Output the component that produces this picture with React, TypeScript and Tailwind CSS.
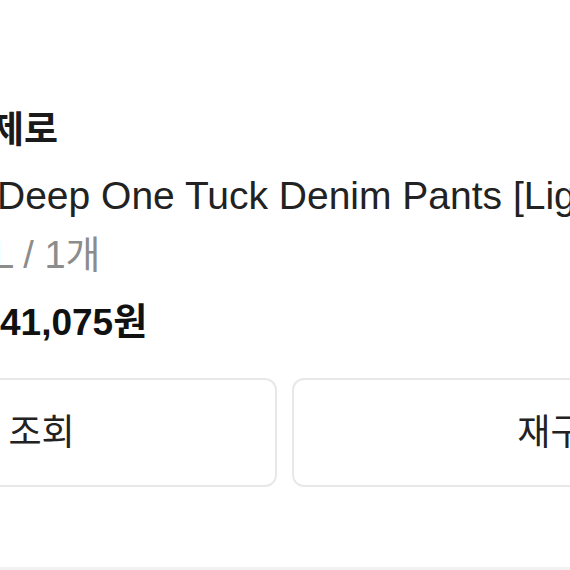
const font = { fontFamily: '"Liberation Sans", "Noto Sans CJK KR", sans-serif' }

export default function App() {
  return (
    <div className="relative h-[570px] w-[570px] overflow-hidden bg-white" style={font}>
      <div className="flex flex-col pt-[112px]">
        <div className="-ml-[78px] h-[37px] whitespace-nowrap text-[37px] font-bold leading-[37px] text-[#1a1a1a]">
          에이제로
        </div>
        <div className="-ml-[3px] mt-[27px] h-[39px] whitespace-nowrap text-[39px] leading-[39px] text-[#222]">
          Deep One Tuck Denim Pants [Light Blue]
        </div>
        <div className="-ml-[7px] mt-[21px] h-[38px] whitespace-nowrap text-[38px] leading-[38px] text-[#8c8c8c]">
          L / 1개
        </div>
        <div className="mt-[30px] h-[37px] whitespace-nowrap text-[37px] font-bold leading-[37px] text-[#111]">
          41,075원
        </div>
        <div className="-ml-[270px] mt-[37px] flex gap-[15px]">
          <div className="flex h-[109px] w-[547px] shrink-0 items-center justify-center rounded-[12px] border-2 border-[#e8e8e8] text-[36px] text-[#222]">
            배송 조회
          </div>
          <div className="flex h-[109px] w-[550px] shrink-0 items-center justify-center rounded-[12px] border-2 border-[#e8e8e8] text-[36px] text-[#222]">
            재구매
          </div>
        </div>
        <div className="mt-[80px] h-[3px] bg-[#f2f2f2]" />
      </div>
    </div>
  )
}
